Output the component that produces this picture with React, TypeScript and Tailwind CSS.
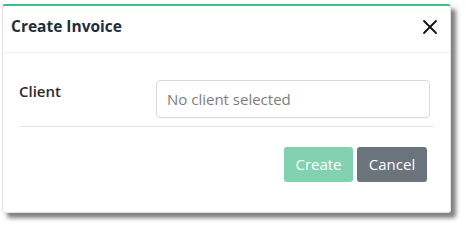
import React from 'react';

export default function App() {
  return (
    <div className="min-h-screen bg-white pl-[2px] pt-[4px] font-['Open_Sans',sans-serif]">
      <div className="w-[449px] h-[209px] flex flex-col bg-white border border-[#e2e2e2] border-t-2 border-t-[#3fc085] rounded-[3px] shadow-[5px_5px_4px_rgba(0,0,0,0.5)]">
        <div className="h-[47px] flex items-center justify-between pl-[8px] pr-[12px] pb-[4px] border-b border-[#efefef]">
          <h1 className="text-[15.5px] font-bold text-[#1f2e3c]">Create Invoice</h1>
          <button className="w-[16px] h-[16px] flex items-center justify-center text-[#111]">
            <svg width="16" height="16" viewBox="0 0 16 16">
              <path d="M2 2 L14 14 M14 2 L2 14" stroke="currentColor" strokeWidth="1.8" strokeLinecap="round" />
            </svg>
          </button>
        </div>
        <div className="px-[16px] pt-[27px]">
          <div className="flex items-start pb-[8px] border-b border-[#e4e4e4]">
            <label className="w-[137px] text-[15px] font-semibold text-[#2b2b2b]">Client</label>
            <div className="w-[274px] h-[38px] flex items-center px-[10px] border border-[#d9d9d9] rounded-[4px] text-[15px] text-[#7d7d7d]">
              No client selected
            </div>
          </div>
        </div>
        <div className="flex justify-end gap-[4px] pt-[20px] pr-[23px]">
          <button className="w-[69px] h-[35px] rounded-[3px] bg-[#82d2b0] text-white text-[15px]">Create</button>
          <button className="w-[70px] h-[35px] rounded-[3px] bg-[#6b737d] text-white text-[15px]">Cancel</button>
        </div>
      </div>
    </div>
  );
}
